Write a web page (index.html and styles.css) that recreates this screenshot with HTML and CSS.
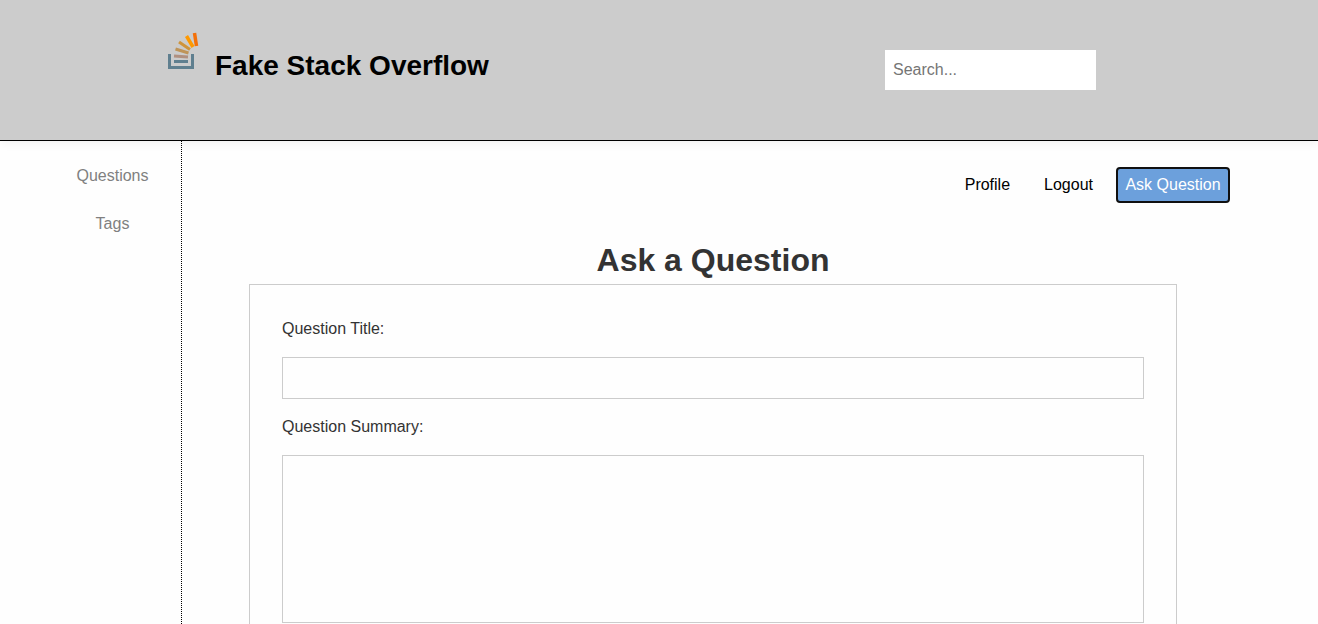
FILE: index.html
```html
<!DOCTYPE html>
<html lang="en">
<head>
<meta charset="utf-8">
<title>Fake Stack Overflow</title>
<link rel="stylesheet" href="styles.css">
</head>
<body>
<header class="header">
  <div class="brand">
    <svg class="logo" viewBox="0 0 32 38" aria-hidden="true">
      <path d="M1.5 22v13.500h23V22" fill="none" stroke="#5f7f8f" stroke-width="3"/>
      <g fill="none" stroke-width="3">
        <path d="M6 29.500h14" stroke="#5f7f8f"/>
        <path d="M6 24l14 1" stroke="#b09080"/>
        <path d="M7.500 17l13 4" stroke="#bf9458"/>
        <path d="M11 10l11 7.500" stroke="#cf943c"/>
        <path d="M18.500 4l6.500 11" stroke="#ff9900" stroke-width="3.500"/>
        <path d="M26.500 1l2 13" stroke="#f47008" stroke-width="3.500"/>
      </g>
    </svg>
    <h1 class="site-name">Fake Stack Overflow</h1>
  </div>
  <input class="search" type="search" placeholder="Search..." aria-label="Search">
</header>
<div class="layout">
  <nav class="sidebar">
    <a class="side-link" href="#questions">Questions</a>
    <a class="side-link" href="#tags">Tags</a>
  </nav>
  <main class="content">
    <div class="toolbar">
      <a class="user-link" href="#profile">Profile</a>
      <a class="user-link" href="#logout">Logout</a>
      <button class="ask-button" type="button">Ask Question</button>
    </div>
    <section class="ask">
      <h2 class="ask-title">Ask a Question</h2>
      <form class="ask-form">
        <label class="label" for="title">Question Title:</label>
        <input class="field" id="title" type="text">
        <label class="label" for="summary">Question Summary:</label>
        <textarea class="field field-large" id="summary" rows="8"></textarea>
      </form>
    </section>
  </main>
</div>
</body>
</html>
```
FILE: styles.css
```css
* {
  box-sizing: border-box;
}

body {
  margin: 0;
  height: 100vh;
  display: flex;
  flex-direction: column;
  background: #fefefe;
  font-family: "Liberation Sans", Arial, sans-serif;
  font-size: 16px;
  line-height: 18px;
  color: #333;
}

.header {
  display: flex;
  align-items: flex-start;
  justify-content: space-between;
  flex-shrink: 0;
  padding: 32px 222px 50px 168px;
  background: #ccc;
  border-bottom: 1px solid #000;
  box-shadow: 0 2px 10px rgba(0, 0, 0, 0.06);
}

.brand {
  display: flex;
  gap: 15px;
}

.logo {
  width: 32px;
  height: 38px;
}

.site-name {
  margin: 18px 0 0;
  font-size: 28px;
  line-height: 32px;
  color: #000;
}

.search {
  width: 211px;
  height: 40px;
  margin: 18px 0 0;
  padding: 8px;
  border: 0;
  background: #fff;
  font: inherit;
}

.search::placeholder {
  color: #757575;
}

.layout {
  display: flex;
  flex: 1;
  min-height: 0;
  overflow: hidden;
}

.sidebar {
  display: flex;
  flex-direction: column;
  align-items: center;
  gap: 30px;
  flex: 0 0 182px;
  padding: 26px 0 0 44px;
  border-right: 1px dotted #000;
}

.side-link {
  color: #808080;
  text-decoration: none;
}

.content {
  flex: 1;
  padding-top: 26px;
}

.toolbar {
  display: flex;
  align-items: center;
  justify-content: flex-end;
  padding-right: 88px;
}

.user-link {
  margin-right: 34px;
  line-height: 20px;
  color: #000;
  text-decoration: none;
}

.user-link:nth-child(2) {
  margin-right: 23px;
}

.ask-button {
  width: 114px;
  height: 36px;
  padding: 0;
  border: 2px solid #101010;
  border-radius: 4px;
  background: #6ca0dc;
  color: #fff;
  font: inherit;
}

.ask {
  padding: 39px 141px 32px 67px;
}

.ask-title {
  margin: 0 0 6px;
  font-size: 32px;
  line-height: 36px;
  text-align: center;
}

.ask-form {
  display: flex;
  flex-direction: column;
  padding: 34px 32px;
  border: 1px solid #ccc;
}

.label {
  margin-bottom: 18px;
  line-height: 20px;
}

.field {
  width: 100%;
  height: 42px;
  margin: 0 0 18px;
  padding: 8px;
  border: 1px solid #ccc;
  background: #fefefe;
  font: inherit;
}

.field-large {
  height: 168px;
  resize: none;
}
```
